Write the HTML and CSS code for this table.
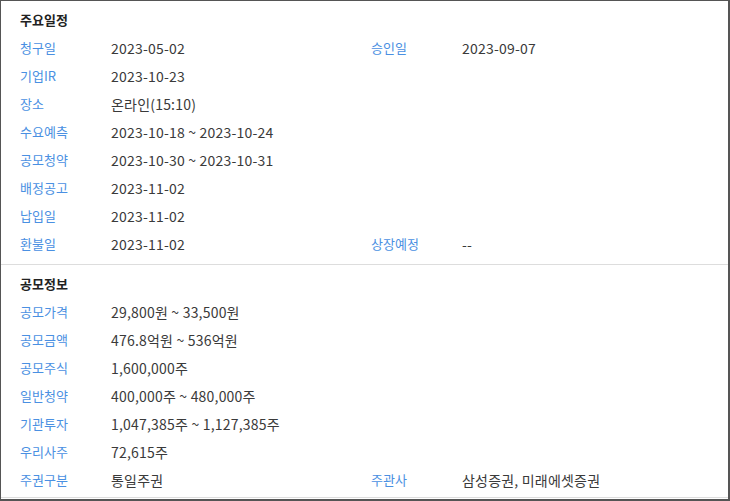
FILE: index.html
```html
<!DOCTYPE html>
<html>
<head>
    <title>공모 일정</title>
    <meta charset="UTF-8">
    <link rel="stylesheet" href="styles.css">
</head>
<body>
    <div class="box">
        <div class="section">
            <h3>주요일정</h3>
            <div class="grid">
                <span class="label">청구일</span><span class="value">2023-05-02</span>
                <span class="label">승인일</span><span class="value">2023-09-07</span>
                <span class="label">기업IR</span><span class="value wide">2023-10-23</span>
                <span class="label">장소</span><span class="value wide">온라인(15:10)</span>
                <span class="label">수요예측</span><span class="value wide">2023-10-18 ~ 2023-10-24</span>
                <span class="label">공모청약</span><span class="value wide">2023-10-30 ~ 2023-10-31</span>
                <span class="label">배정공고</span><span class="value wide">2023-11-02</span>
                <span class="label">납입일</span><span class="value wide">2023-11-02</span>
                <span class="label">환불일</span><span class="value">2023-11-02</span>
                <span class="label">상장예정</span><span class="value">--</span>
            </div>
        </div>
        <div class="section last">
            <h3>공모정보</h3>
            <div class="grid">
                <span class="label">공모가격</span><span class="value wide">29,800원 ~ 33,500원</span>
                <span class="label">공모금액</span><span class="value wide">476.8억원 ~ 536억원</span>
                <span class="label">공모주식</span><span class="value wide">1,600,000주</span>
                <span class="label">일반청약</span><span class="value wide">400,000주 ~ 480,000주</span>
                <span class="label">기관투자</span><span class="value wide">1,047,385주 ~ 1,127,385주</span>
                <span class="label">우리사주</span><span class="value wide">72,615주</span>
                <span class="label">주권구분</span><span class="value">통일주권</span>
                <span class="label">주관사</span><span class="value">삼성증권, 미래에셋증권</span>
            </div>
        </div>
    </div>
</body>
</html>
```

FILE: styles.css
```css
body {
    margin: 0;
    font-family: "Noto Sans CJK KR", "Noto Sans", sans-serif;
    background: white;
}
.box {
    width: 727px;
    height: 498px;
    border: 1px solid #555;
    border-right-width: 2px;
    border-bottom-width: 2px;
    overflow: hidden;
}
.section {
    padding: 8px 0 6px 19px;
    border-bottom: 1px solid #ddd;
}
.section.last {
    padding-bottom: 3px;
}
.section h3 {
    margin: 0 0 3px 0;
    font-size: 13px;
    line-height: 22px;
    font-weight: bold;
    color: #222;
}
.grid {
    display: grid;
    grid-template-columns: 91px 260px 91px 1fr;
}
.label, .value {
    line-height: 28px;
    height: 28px;
    white-space: nowrap;
}
.label {
    font-size: 13px;
    color: #4a90e2;
}
.value {
    font-size: 14px;
    letter-spacing: 0.2px;
    color: #3a3a3a;
}
.value.wide {
    grid-column: span 3;
}
```
